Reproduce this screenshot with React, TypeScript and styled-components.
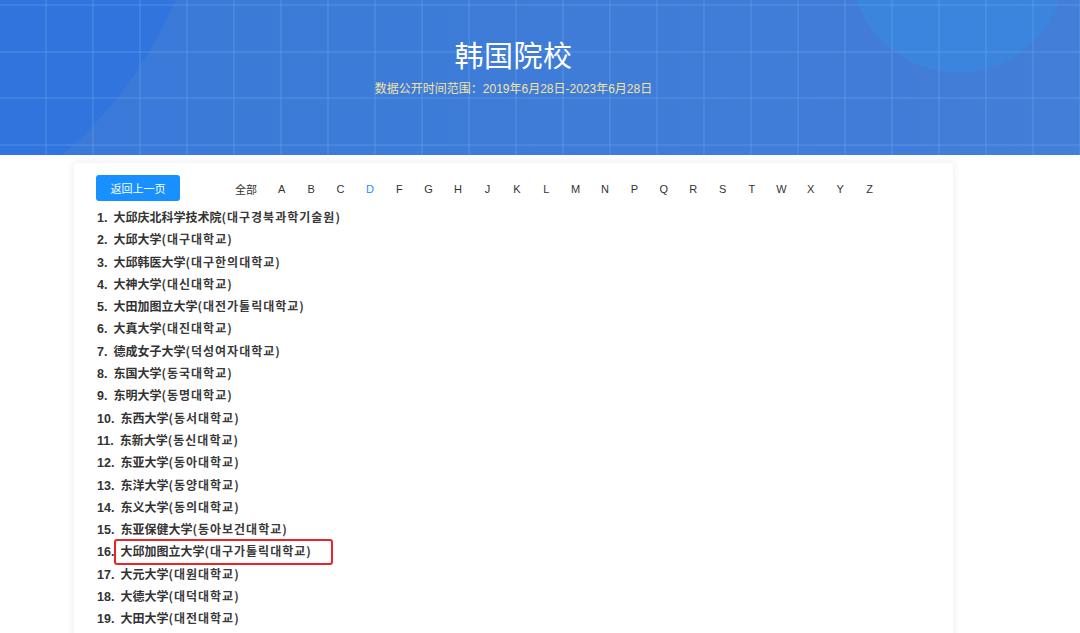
import React from "react";
import styled, { createGlobalStyle } from "styled-components";

const GlobalStyle = createGlobalStyle`
  html, body {
    margin: 0;
    padding: 0;
    background: #fff;
  }
  body {
    font-family: "Liberation Sans", "Noto Sans CJK SC", "Noto Sans CJK KR", sans-serif;
    color: #333;
  }
`;

const Page = styled.div`
  width: 1080px;
  min-height: 633px;
`;

const Header = styled.div`
  height: 155px;
  padding-right: 53px;
  box-sizing: border-box;
  display: flex;
  flex-direction: column;
  align-items: center;
  background:
    repeating-linear-gradient(90deg, transparent 0 45px, rgba(100, 165, 240, 0.28) 45px 47px),
    repeating-linear-gradient(180deg, transparent 0 4px, rgba(100, 165, 240, 0.28) 4px 6px, transparent 6px 46.7px),
    radial-gradient(circle at 958px -35px, #3b85df 0 107px, transparent 107.5px),
    radial-gradient(circle at -220px -170px, #3174dd 0 430px, transparent 431px),
    linear-gradient(90deg, #3a79d8 0%, #3e7cd8 50%, #437ed8 100%);
`;

const Title = styled.h1`
  margin: 36px 0 0;
  font-size: 29px;
  line-height: 36px;
  font-weight: normal;
  color: #fff;
  letter-spacing: 0.5px;
  font-family: "Noto Sans CJK SC", sans-serif;
`;

const Subtitle = styled.div`
  margin-top: 9px;
  font-size: 12px;
  line-height: 16px;
  color: #f4e3a2;
`;

const Card = styled.div`
  margin: 8px 0 0 74px;
  width: 879px;
  min-height: 520px;
  background: #fff;
  border-radius: 4px;
  box-shadow: 0 0 8px rgba(40, 40, 80, 0.1);
  padding: 12px 0 30px 22px;
  box-sizing: border-box;
`;

const Toolbar = styled.div`
  display: flex;
  align-items: center;
`;

const BackButton = styled.button`
  width: 84px;
  height: 26px;
  border: none;
  border-radius: 3px;
  background: #1890ff;
  color: #fff;
  font-size: 11px;
  font-family: "Noto Sans CJK SC", sans-serif;
  padding: 0;
  margin-right: 45px;
  cursor: pointer;
`;

const LetterBar = styled.div`
  display: flex;
  align-items: center;
  padding-top: 1px;
`;

const Letter = styled.span<{ $active?: boolean; $wide?: boolean }>`
  width: ${(p) => (p.$wide ? "42px" : "29.4px")};
  text-align: center;
  font-size: 11px;
  color: ${(p) => (p.$active ? "#1890ff" : "#333")};
  cursor: pointer;
`;

const List = styled.ol`
  list-style: none;
  margin: 5px 0 0;
  padding: 0 0 0 1px;
`;

const Item = styled.li`
  height: 22.3px;
  line-height: 22.3px;
  font-size: 12px;
  font-weight: bold;
  color: #333;
  white-space: nowrap;
`;

const Num = styled.span`
  font-size: 12.5px;
  margin-right: 6px;
`;

const Name = styled.span<{ $marked?: boolean }>`
  font-family: "Noto Sans CJK SC", "Noto Sans CJK KR", sans-serif;
  ${(p) =>
    p.$marked
      ? `
    border: 2px solid #e8262a;
    border-radius: 3px;
    padding: 1px 19px 4px 4px;
    margin-left: -6px;
  `
      : ""}
`;

const Korean = styled.span`
  font-family: "Noto Sans CJK KR", sans-serif;
  font-weight: bold;
  letter-spacing: 1px;
  color: #3a3a3a;
`;

const letters = ["A", "B", "C", "D", "F", "G", "H", "J", "K", "L", "M", "N", "P", "Q", "R", "S", "T", "W", "X", "Y", "Z"];

const schools: [string, string][] = [
  ["大邱庆北科学技术院", "대구경북과학기술원"],
  ["大邱大学", "대구대학교"],
  ["大邱韩医大学", "대구한의대학교"],
  ["大神大学", "대신대학교"],
  ["大田加图立大学", "대전가톨릭대학교"],
  ["大真大学", "대진대학교"],
  ["德成女子大学", "덕성여자대학교"],
  ["东国大学", "동국대학교"],
  ["东明大学", "동명대학교"],
  ["东西大学", "동서대학교"],
  ["东新大学", "동신대학교"],
  ["东亚大学", "동아대학교"],
  ["东洋大学", "동양대학교"],
  ["东义大学", "동의대학교"],
  ["东亚保健大学", "동아보건대학교"],
  ["大邱加图立大学", "대구가톨릭대학교"],
  ["大元大学", "대원대학교"],
  ["大德大学", "대덕대학교"],
  ["大田大学", "대전대학교"],
];

const App: React.FunctionComponent = () => {
  return (
    <Page>
      <GlobalStyle />
      <Header>
        <Title>韩国院校</Title>
        <Subtitle>数据公开时间范围：2019年6月28日-2023年6月28日</Subtitle>
      </Header>
      <Card>
        <Toolbar>
          <BackButton>返回上一页</BackButton>
          <LetterBar>
            <Letter $wide>全部</Letter>
            {letters.map((l) => (
              <Letter key={l} $active={l === "D"}>
                {l}
              </Letter>
            ))}
          </LetterBar>
        </Toolbar>
        <List>
          {schools.map(([cn, kr], i) => (
            <Item key={cn + i}>
              <Num>{i + 1}.</Num>
              <Name $marked={i === 15}>
                {cn}
                <Korean>({kr})</Korean>
              </Name>
            </Item>
          ))}
        </List>
      </Card>
    </Page>
  );
};

export default App;
